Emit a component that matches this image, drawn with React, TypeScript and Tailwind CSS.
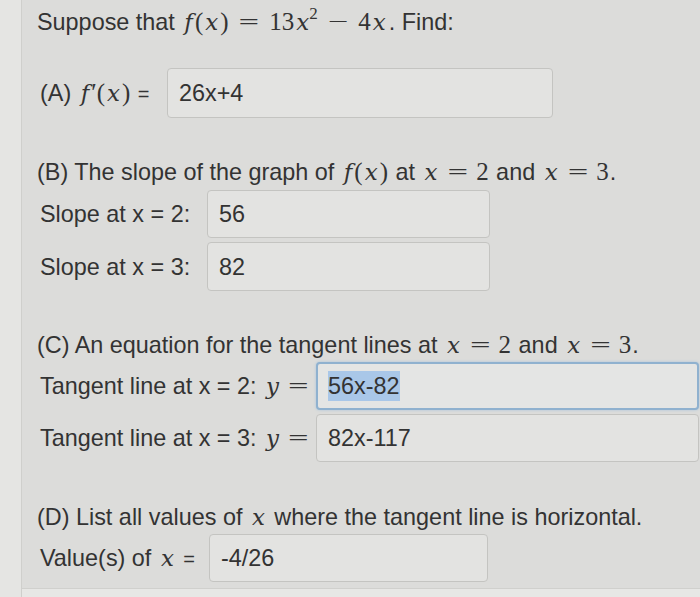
import React from 'react'

const sans = "font-['Liberation_Sans',Arial,sans-serif]"
const serif = "font-['Liberation_Serif','Times_New_Roman',serif]"

// italic math variable
function V({ children }: { children: React.ReactNode }) {
  return <i className="font-['DejaVu_Serif',serif] text-[23px] px-[2px]">{children}</i>
}

function M({ children }: { children: React.ReactNode }) {
  return <span className={`${serif} text-[25px] px-[1px]`}>{children}</span>
}

// relation / binary operator with MathJax-like spacing
function Op({ children, className = 'mx-[7px]' }: { children: React.ReactNode; className?: string }) {
  return (
    <span className={`inline-block font-['DejaVu_Sans',sans-serif] text-[27px] leading-none font-light ${className}`}>
      {children}
    </span>
  )
}

interface AnswerRowProps {
  label: React.ReactNode
  labelWidth: string
  boxWidth: string
  value: string
  boxHeight?: string
  focused?: boolean
  className?: string
}

function AnswerRow({ label, labelWidth, boxWidth, value, boxHeight = 'h-[48px]', focused, className = '' }: AnswerRowProps) {
  return (
    <div className={`flex items-center ${className}`}>
      <div className={`${labelWidth} shrink-0 pl-[3px] whitespace-nowrap h-[30px]`}>{label}</div>
      <div
        className={`${boxWidth} ${boxHeight} shrink-0 flex items-center pl-[11px] rounded-[4px] ${
          focused
            ? 'border-2 border-[#8fb1cf] bg-[#e4e5e4] shadow-[0_0_3px_#a9c4dc]'
            : 'border border-[#c4c4c1] bg-[#e3e3e1]'
        }`}
      >
        <span className={focused ? 'bg-[#a9c7e8] -ml-[1px]' : ''}>{value}</span>
      </div>
    </div>
  )
}

export default function App() {
  return (
    <div className={`${sans} flex h-[597px] w-[700px] overflow-hidden bg-[#e6e6e4] text-[23.4px] text-[#333333] leading-[30px]`}>
      <div className="w-[22px] shrink-0 border-r border-[#cfcfcc] bg-[#e5e5e3]" />
      <div className="flex-1 flex flex-col">
        <div className="flex-1 bg-[#dcdcda] pl-[15px] pt-[7px]">
          <p className="h-[30px] whitespace-nowrap">
            Suppose that{' '}
            <M>
              <V>f</V>(<V>x</V>)<Op className="mx-[9px]">=</Op>13<V>x</V>
              <sup className="text-[17px] -top-[11px] -ml-[2px]">2</sup>
              <Op className="mx-[9px]">−</Op>4<V>x</V>
            </M>
            . Find:
          </p>

          <AnswerRow
            className="mt-[31px]"
            labelWidth="w-[130px]"
            boxWidth="w-[386px]"
            boxHeight="h-[50px]"
            label={
              <span>
                (A) <M><V>f</V>′(<V>x</V>)</M> <span className="text-[20px]">=</span>
              </span>
            }
            value="26x+4"
          />

          <p className="mt-[39px] h-[30px] whitespace-nowrap">
            (B) The slope of the graph of{' '}
            <M>
              <V>f</V>(<V>x</V>)
            </M>{' '}
            at <M><V>x</V><Op>=</Op>2</M> and <M><V>x</V><Op>=</Op>3</M>.
          </p>
          <AnswerRow className="mt-[3px]" labelWidth="w-[170px]" boxWidth="w-[283px]" label="Slope at x = 2:" value="56" />
          <AnswerRow className="mt-[4px]" labelWidth="w-[170px]" boxWidth="w-[283px]" boxHeight="h-[49px]" label="Slope at x = 3:" value="82" />

          <p className="mt-[39px] h-[30px] whitespace-nowrap">
            (C) An equation for the tangent lines at <M><V>x</V><Op>=</Op>2</M> and <M><V>x</V><Op>=</Op>3</M>.
          </p>
          <AnswerRow
            className="mt-[2px]"
            labelWidth="w-[279px]"
            boxWidth="w-[383px]"
            focused
            label={
              <span>
                Tangent line at x = 2: <M><V>y</V><Op className="ml-[6px]">=</Op></M>
              </span>
            }
            value="56x-82"
          />
          <AnswerRow
            className="mt-[4px]"
            labelWidth="w-[279px]"
            boxWidth="w-[383px]"
            label={
              <span>
                Tangent line at x = 3: <M><V>y</V><Op className="ml-[6px]">=</Op></M>
              </span>
            }
            value="82x-117"
          />

          <p className="mt-[40px] h-[30px] whitespace-nowrap">
            (D) List all values of <M><V>x</V></M> where the tangent line is horizontal.
          </p>
          <AnswerRow
            className="mt-[2px]"
            labelWidth="w-[172px]"
            boxWidth="w-[279px]"
            label={
              <span>
                Value(s) of <M><V>x</V></M> <span className="text-[20px]">=</span>
              </span>
            }
            value="-4/26"
          />
        </div>
        <div className="h-[9px] shrink-0 border-t border-[#d0d0cd] bg-[#e7e7e5]" />
      </div>
    </div>
  )
}
